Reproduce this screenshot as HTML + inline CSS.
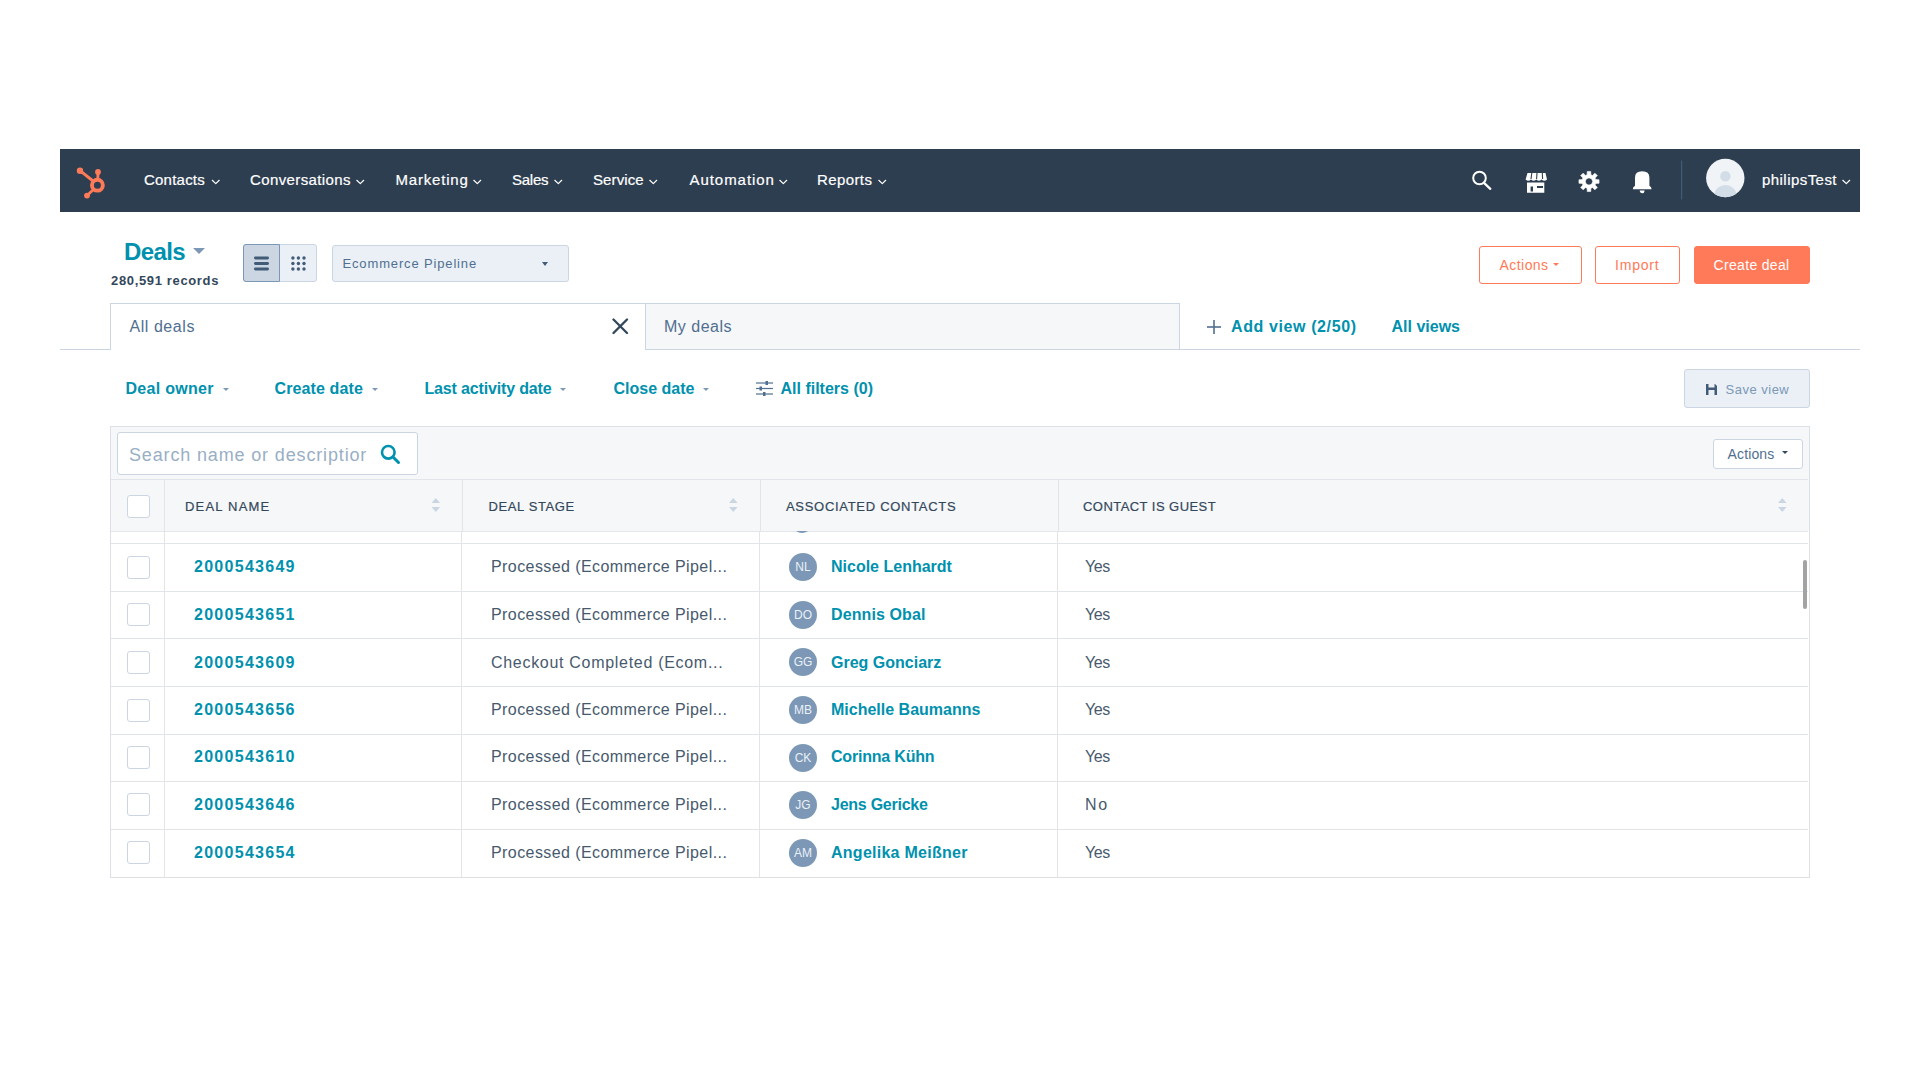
<!DOCTYPE html>
<html><head><meta charset="utf-8">
<style>
*{box-sizing:border-box;margin:0;padding:0}
html,body{width:1920px;height:1080px;background:#fff;overflow:hidden;font-family:"Liberation Sans",sans-serif;color:#33475b}
.a{position:absolute;white-space:nowrap;line-height:1}
#nav{position:absolute;left:60px;top:149px;width:1800px;height:63px;background:#2d3e50}
.ni{position:absolute;top:22.5px;color:#fff;font-size:15px;line-height:1;white-space:nowrap;-webkit-text-stroke:0.2px #fff}
.chev{position:absolute;width:9px;height:6px}
.btn{position:absolute;border:1px solid #ff7a59;border-radius:3px}
.flt{position:absolute;top:381px;color:#0091ae;font-size:16px;font-weight:bold;line-height:1;white-space:nowrap}
.caret{position:absolute;width:0;height:0;border-left:3.5px solid transparent;border-right:3.5px solid transparent;border-top:3.5px solid #7c98b6}
.th{position:absolute;top:500px;font-size:13px;color:#33475b;line-height:1;letter-spacing:0.55px;white-space:nowrap;-webkit-text-stroke:0.2px #33475b}
.row{position:absolute;left:111px;width:1697px;height:1px;background:#e1e4e8}
.cb{position:absolute;left:127px;width:23px;height:23px;border:1px solid #cbd6e2;border-radius:3px;background:#fff}
.dn{position:absolute;left:194px;color:#0091ae;font-size:16px;font-weight:bold;line-height:1;letter-spacing:1.28px;white-space:nowrap}
.ds{position:absolute;left:491px;color:#475a6d;font-size:16px;line-height:1;letter-spacing:0.42px;white-space:nowrap}
.av{position:absolute;left:789px;width:28px;height:28px;border-radius:50%;background:#7c98b6;color:#eaf0f6;font-size:12px;line-height:28px;text-align:center}
.cn{position:absolute;left:831px;color:#0091ae;font-size:16px;font-weight:bold;line-height:1;white-space:nowrap}
.yn{position:absolute;left:1085px;color:#475a6d;font-size:16px;line-height:1;letter-spacing:-0.4px;white-space:nowrap}
.vl{position:absolute;width:1px;background:#e1e4e8}
.sort{position:absolute;width:9px;height:15px}
</style></head><body>

<div id="nav">
  <svg class="a" style="left:0;top:0" width="60" height="63" viewBox="0 0 60 63">
    <g fill="#ff7a59" stroke="#ff7a59">
      <circle cx="37.4" cy="36.2" r="5.45" fill="none" stroke-width="3.9"/>
      <line x1="37.8" y1="30" x2="38" y2="23" stroke-width="2.8"/>
      <circle cx="38" cy="23" r="2.9" stroke="none"/>
      <line x1="20" y1="21.7" x2="33" y2="32" stroke-width="2.9"/>
      <circle cx="20" cy="21.7" r="3.2" stroke="none"/>
      <line x1="27" y1="46.6" x2="33.5" y2="40.5" stroke-width="2.8"/>
      <circle cx="27" cy="46.6" r="2.9" stroke="none"/>
    </g>
  </svg>
  <div class="ni" style="left:84px;letter-spacing:0.22px">Contacts</div>
  <div class="ni" style="left:190px;letter-spacing:0.39px">Conversations</div>
  <div class="ni" style="left:335.5px;letter-spacing:0.8px">Marketing</div>
  <div class="ni" style="left:452px;letter-spacing:-0.24px">Sales</div>
  <div class="ni" style="left:533px;letter-spacing:0.1px">Service</div>
  <div class="ni" style="left:629.5px;letter-spacing:0.95px">Automation</div>
  <div class="ni" style="left:757px;letter-spacing:0.4px">Reports</div>
  <div class="ni" style="left:1702px;letter-spacing:0.45px">philipsTest</div>
  <svg class="a" style="left:0;top:0" width="1800" height="63" viewBox="0 0 1800 63">
    <g fill="none" stroke="#fff" stroke-width="1.2" stroke-linecap="round" stroke-linejoin="round">
      <polyline points="152.3,31.3 155.8,34.6 159.2,31.3"/>
      <polyline points="296.8,31.3 300.3,34.6 303.7,31.3"/>
      <polyline points="413.8,31.3 417.3,34.6 420.7,31.3"/>
      <polyline points="494.8,31.3 498.3,34.6 501.7,31.3"/>
      <polyline points="589.8,31.3 593.3,34.6 596.7,31.3"/>
      <polyline points="719.8,31.3 723.3,34.6 726.7,31.3"/>
      <polyline points="818.8,31.3 822.3,34.6 825.7,31.3"/>
      <polyline points="1782.8,31.3 1786.3,34.6 1789.7,31.3"/>
    </g>
    <!-- search -->
    <g fill="none" stroke="#fff" stroke-width="2">
      <circle cx="1419.5" cy="29" r="6.3"/>
      <line x1="1424" y1="33.8" x2="1430.3" y2="39.8" stroke-width="2.3" stroke-linecap="round"/>
    </g>
    <!-- marketplace -->
    <g fill="#fff">
      <path d="M1467.5 24 h18 l1.5 6.5 q-2.6 2.5 -5.4 0 q-2.6 2.5 -5.3 0 q-2.6 2.5 -5.3 0 q-2.6 2.5 -5.4 0 z"/>
      <path d="M1467 33.5 h17.3 v10.3 h-17.3 z M1470.6 37.6 v5 h2.4 v-5 z M1477 37 v2 h6 v-2 z" fill-rule="evenodd"/>
    </g>
    <g stroke="#2d3e50" stroke-width="1.1">
      <line x1="1471.8" y1="24" x2="1471" y2="30"/>
      <line x1="1477" y1="24" x2="1476.6" y2="30"/>
      <line x1="1482.3" y1="24" x2="1482.6" y2="30"/>
    </g>
    <!-- gear -->
    <g transform="translate(1529,32.5)">
      <path fill="#fff" fill-rule="evenodd" stroke="#fff" stroke-width="0.6" stroke-linejoin="round" d="M-1.88,-6.74 L-1.74,-10.05 L1.74,-10.05 L1.88,-6.74 L3.44,-6.10 L5.88,-8.34 L8.34,-5.88 L6.10,-3.44 L6.74,-1.88 L10.05,-1.74 L10.05,1.74 L6.74,1.88 L6.10,3.44 L8.34,5.88 L5.88,8.34 L3.44,6.10 L1.88,6.74 L1.74,10.05 L-1.74,10.05 L-1.88,6.74 L-3.44,6.10 L-5.88,8.34 L-8.34,5.88 L-6.10,3.44 L-6.74,1.88 L-10.05,1.74 L-10.05,-1.74 L-6.74,-1.88 L-6.10,-3.44 L-8.34,-5.88 L-5.88,-8.34 L-3.44,-6.10 Z M0,-3.6 A3.6,3.6 0 1,0 0.01,-3.6 Z"/>
    </g>
    <!-- bell -->
    <g fill="#fff">
      <path d="M1572.8 40.3 q0-2.2 2.2-3.6 v-8.2 q0-6.2 7.2-6.2 q7.2 0 7.2 6.2 v8.2 q2.2 1.4 2.2 3.6 z"/>
      <path d="M1579.7 41.5 h5 q-0.3 2.8 -2.5 2.8 q-2.2 0 -2.5 -2.8 z"/>
    </g>
    <line x1="1621.6" y1="11.5" x2="1621.6" y2="50.5" stroke="#425b76" stroke-width="1.2"/>
    <!-- avatar -->
    <circle cx="1665.3" cy="29" r="19.2" fill="#f1f4f7"/>
    <clipPath id="avc"><circle cx="1665.3" cy="29" r="19.2"/></clipPath>
    <g clip-path="url(#avc)" fill="#d3dde7">
      <circle cx="1665.4" cy="27.3" r="5.2"/>
      <ellipse cx="1665.4" cy="46" rx="11" ry="10"/>
    </g>
  </svg>
</div>

<!-- header -->
<div class="a" style="left:124px;top:240px;font-size:24px;font-weight:bold;color:#0091ae;letter-spacing:-0.6px">Deals</div>
<div class="a" style="left:192.5px;top:248px;width:0;height:0;border-left:6.5px solid transparent;border-right:6.5px solid transparent;border-top:6.5px solid #7c98b6"></div>
<div class="a" style="left:111px;top:274px;font-size:13px;font-weight:bold;color:#33475b;letter-spacing:0.65px">280,591 records</div>

<div class="a" style="left:243px;top:244px;width:74px;height:38px;border:1px solid #cbd6e2;border-radius:3px;background:#eaf0f6"></div>
<div class="a" style="left:243px;top:244px;width:37px;height:38px;border:1px solid #7c98b6;border-radius:3px 0 0 3px;background:#cbd6e2"></div>
<svg class="a" style="left:243px;top:244px" width="74" height="38" viewBox="0 0 74 38">
  <g fill="#425b76">
    <rect x="11" y="12.5" width="15" height="3" rx="1.4"/>
    <rect x="11" y="18" width="15" height="3" rx="1.4"/>
    <rect x="11" y="23.5" width="15" height="3" rx="1.4"/>
    <circle cx="49.9" cy="14" r="1.7"/><circle cx="55.4" cy="14" r="1.7"/><circle cx="61" cy="14" r="1.7"/>
    <circle cx="49.9" cy="19.5" r="1.7"/><circle cx="55.4" cy="19.5" r="1.7"/><circle cx="61" cy="19.5" r="1.7"/>
    <circle cx="49.9" cy="25" r="1.7"/><circle cx="55.4" cy="25" r="1.7"/><circle cx="61" cy="25" r="1.7"/>
  </g>
</svg>

<div class="a" style="left:332px;top:244.5px;width:237px;height:37.5px;border:1px solid #cbd6e2;border-radius:3px;background:#eaf0f6"></div>
<div class="a" style="left:342.5px;top:257px;font-size:13px;color:#516f90;letter-spacing:0.85px">Ecommerce Pipeline</div>
<div class="a" style="left:542px;top:262px;width:0;height:0;border-left:3.5px solid transparent;border-right:3.5px solid transparent;border-top:4px solid #425b76"></div>

<div class="btn" style="left:1479px;top:245.5px;width:102.5px;height:38.5px"></div>
<div class="a" style="left:1499.5px;top:258px;font-size:14px;color:#ff7a59;letter-spacing:0.45px">Actions</div>
<div class="a" style="left:1553px;top:262.5px;width:0;height:0;border-left:3.5px solid transparent;border-right:3.5px solid transparent;border-top:3.5px solid #ff7a59"></div>
<div class="btn" style="left:1595px;top:245.5px;width:85px;height:38.5px"></div>
<div class="a" style="left:1615px;top:258px;font-size:14px;color:#ff7a59;letter-spacing:0.8px">Import</div>
<div class="btn" style="left:1694px;top:245.5px;width:116px;height:38.5px;background:#ff7a59"></div>
<div class="a" style="left:1713.5px;top:258px;font-size:14px;color:#fff;letter-spacing:0.33px">Create deal</div>

<!-- tabs -->
<div class="a" style="left:60px;top:349px;width:1800px;height:1px;background:#cbd6e2"></div>
<div class="a" style="left:645px;top:303px;width:535px;height:47px;border:1px solid #cbd6e2;background:#f6f7f9"></div>
<div class="a" style="left:110px;top:303px;width:536px;height:47px;border:1px solid #cbd6e2;border-bottom:none;background:#fff"></div>
<div class="a" style="left:129.5px;top:318.7px;font-size:16px;color:#516f90;letter-spacing:0.55px">All deals</div>
<svg class="a" style="left:612px;top:318px" width="17" height="17" viewBox="0 0 17 17"><g stroke="#33475b" stroke-width="2.3" stroke-linecap="round"><line x1="1.5" y1="1.5" x2="15" y2="15"/><line x1="15" y1="1.5" x2="1.5" y2="15"/></g></svg>
<div class="a" style="left:664px;top:318.7px;font-size:16px;color:#516f90;letter-spacing:0.5px">My deals</div>
<svg class="a" style="left:1206px;top:319px" width="16" height="16" viewBox="0 0 16 16"><g stroke="#516f90" stroke-width="1.6"><line x1="8" y1="1" x2="8" y2="15"/><line x1="1" y1="8" x2="15" y2="8"/></g></svg>
<div class="a" style="left:1231px;top:319px;font-size:16px;font-weight:bold;color:#0091ae;letter-spacing:0.61px">Add view (2/50)</div>
<div class="a" style="left:1391.5px;top:319px;font-size:16px;font-weight:bold;color:#0091ae">All views</div>

<!-- filters -->
<div class="flt" style="left:125.5px;letter-spacing:0.29px">Deal owner</div>
<div class="caret" style="left:222.5px;top:387.5px"></div>
<div class="flt" style="left:274.5px;letter-spacing:0.12px">Create date</div>
<div class="caret" style="left:372px;top:387.5px"></div>
<div class="flt" style="left:424.5px;letter-spacing:-0.16px">Last activity date</div>
<div class="caret" style="left:560px;top:387.5px"></div>
<div class="flt" style="left:613.5px">Close date</div>
<div class="caret" style="left:702.5px;top:387.5px"></div>
<svg class="a" style="left:755px;top:380px" width="19" height="17" viewBox="0 0 19 17">
  <g stroke="#516f90" stroke-width="1.2" fill="#516f90">
    <line x1="1" y1="3" x2="18" y2="3"/><line x1="1" y1="8.5" x2="18" y2="8.5"/><line x1="1" y1="14" x2="18" y2="14"/>
    <rect x="10.5" y="1" width="2.5" height="4" stroke="none"/>
    <rect x="4.5" y="6.5" width="2.5" height="4" stroke="none"/>
    <rect x="8" y="12" width="2.5" height="4" stroke="none"/>
  </g>
</svg>
<div class="flt" style="left:780.5px">All filters (0)</div>

<div class="a" style="left:1684px;top:369px;width:125.5px;height:38.5px;border:1px solid #cbd6e2;border-radius:3px;background:#eaf0f6"></div>
<svg class="a" style="left:1706px;top:383.5px" width="11" height="11" viewBox="0 0 11 11"><path fill="#425b76" fill-rule="evenodd" d="M0 0 h9 l2 2 v9 h-11 z M2.5 0 v3.5 h6 v-3.5 z M2.5 6 v5 h6 v-5 z"/></svg>
<div class="a" style="left:1725.5px;top:383px;font-size:13px;color:#7c98b6;letter-spacing:0.5px">Save view</div>

<!-- table -->
<div class="a" style="left:110px;top:426px;width:1700px;height:452px;border:1px solid #dde1e6;background:#fff"></div>
<div class="a" style="left:111px;top:427px;width:1698px;height:104px;background:#f6f7f9"></div>
<div class="a" style="left:117px;top:432px;width:301px;height:43px;border:1px solid #cbd6e2;border-radius:3px;background:#fff"></div>
<div class="a" style="left:129px;top:446px;font-size:18px;color:#99afc4;letter-spacing:0.85px">Search name or descriptior</div>
<svg class="a" style="left:379px;top:443px" width="23" height="23" viewBox="0 0 23 23"><g fill="none" stroke="#0091ae"><circle cx="9.3" cy="9.3" r="6.3" stroke-width="2.6"/><line x1="14" y1="14" x2="19.5" y2="19.5" stroke-width="3" stroke-linecap="round"/></g></svg>

<div class="a" style="left:1712.5px;top:438.5px;width:90px;height:30px;border:1px solid #cbd6e2;border-radius:3px;background:#fff"></div>
<div class="a" style="left:1727.5px;top:447px;font-size:14px;color:#516f90;letter-spacing:0.15px">Actions</div>
<div class="a" style="left:1781.5px;top:451px;width:0;height:0;border-left:3.5px solid transparent;border-right:3.5px solid transparent;border-top:3.5px solid #33475b"></div>

<div class="row" style="top:479px;background:#e1e4e8"></div>
<div class="row" style="top:530.5px;height:1.5px;background:#e3e6ea"></div>
<div class="cb" style="top:494.5px"></div>
<div class="th" style="left:185px;letter-spacing:1.2px">DEAL NAME</div>
<div class="th" style="left:488.5px;letter-spacing:0.62px">DEAL STAGE</div>
<div class="th" style="left:786px;letter-spacing:0.7px">ASSOCIATED CONTACTS</div>
<div class="th" style="left:1083px;letter-spacing:0.45px">CONTACT IS GUEST</div>
<svg class="a" style="left:0;top:0" width="1920" height="1080" viewBox="0 0 1920 1080">
  <g fill="#cbd6e2">
    <path d="M431.5 503 l4.3 -5 l4.3 5 z M431.5 507 l4.3 5 l4.3 -5 z"/>
    <path d="M729 503 l4.3 -5 l4.3 5 z M729 507 l4.3 5 l4.3 -5 z"/>
    <path d="M1778 503 l4.3 -5 l4.3 5 z M1778 507 l4.3 5 l4.3 -5 z"/>
  </g>
  <path d="M796 531 q6 4 12 0 z" fill="#7c98b6"/>
</svg>

<div class="row" style="top:543px"></div>
<div class="row" style="top:591px"></div>
<div class="row" style="top:638px"></div>
<div class="row" style="top:686px"></div>
<div class="row" style="top:733.5px"></div>
<div class="row" style="top:781px"></div>
<div class="row" style="top:829px"></div>

<div class="cb" style="top:555.5px"></div>
<div class="cb" style="top:603px"></div>
<div class="cb" style="top:651px"></div>
<div class="cb" style="top:698.5px"></div>
<div class="cb" style="top:745.5px"></div>
<div class="cb" style="top:793px"></div>
<div class="cb" style="top:840.5px"></div>

<div class="dn" style="top:559px">2000543649</div>
<div class="dn" style="top:607px">2000543651</div>
<div class="dn" style="top:655px">2000543609</div>
<div class="dn" style="top:702px">2000543656</div>
<div class="dn" style="top:749px">2000543610</div>
<div class="dn" style="top:797px">2000543646</div>
<div class="dn" style="top:845px">2000543654</div>

<div class="ds" style="top:559px">Processed (Ecommerce Pipel...</div>
<div class="ds" style="top:607px">Processed (Ecommerce Pipel...</div>
<div class="ds" style="top:655px;letter-spacing:0.7px">Checkout Completed (Ecom...</div>
<div class="ds" style="top:702px">Processed (Ecommerce Pipel...</div>
<div class="ds" style="top:749px">Processed (Ecommerce Pipel...</div>
<div class="ds" style="top:797px">Processed (Ecommerce Pipel...</div>
<div class="ds" style="top:845px">Processed (Ecommerce Pipel...</div>

<div class="av" style="top:553px">NL</div>
<div class="av" style="top:600.5px">DO</div>
<div class="av" style="top:648px">GG</div>
<div class="av" style="top:696px">MB</div>
<div class="av" style="top:743.5px">CK</div>
<div class="av" style="top:791px">JG</div>
<div class="av" style="top:839px">AM</div>

<div class="cn" style="top:559px">Nicole Lenhardt</div>
<div class="cn" style="top:607px;letter-spacing:0.1px">Dennis Obal</div>
<div class="cn" style="top:655px">Greg Gonciarz</div>
<div class="cn" style="top:702px">Michelle Baumanns</div>
<div class="cn" style="top:749px;letter-spacing:-0.2px">Corinna Kühn</div>
<div class="cn" style="top:797px;letter-spacing:-0.25px">Jens Gericke</div>
<div class="cn" style="top:845px;letter-spacing:0.26px">Angelika Meißner</div>

<div class="yn" style="top:559px">Yes</div>
<div class="yn" style="top:607px">Yes</div>
<div class="yn" style="top:655px">Yes</div>
<div class="yn" style="top:702px">Yes</div>
<div class="yn" style="top:749px">Yes</div>
<div class="yn" style="top:797px;letter-spacing:1.6px">No</div>
<div class="yn" style="top:845px">Yes</div>

<div class="vl" style="left:164px;top:480px;height:51px"></div>
<div class="vl" style="left:462px;top:480px;height:51px"></div>
<div class="vl" style="left:760px;top:480px;height:51px"></div>
<div class="vl" style="left:1058px;top:480px;height:51px"></div>
<div class="vl" style="left:163.5px;top:531px;height:346px"></div>
<div class="vl" style="left:461px;top:531px;height:346px"></div>
<div class="vl" style="left:759px;top:531px;height:346px"></div>
<div class="vl" style="left:1057px;top:531px;height:346px"></div>
<div class="a" style="left:1803px;top:560px;width:4px;height:49px;border-radius:2px;background:#a3a3a3"></div>

</body></html>
